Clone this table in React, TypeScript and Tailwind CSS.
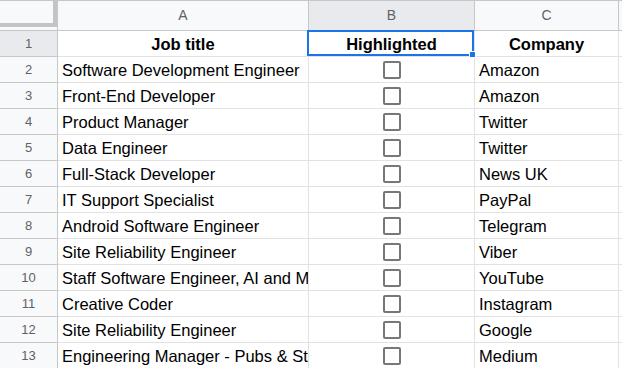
import React from 'react';

type Row = {
  title: string;
  company: string;
};

const rows: Row[] = [
  { title: 'Software Development Engineer', company: 'Amazon' },
  { title: 'Front-End Developer', company: 'Amazon' },
  { title: 'Product Manager', company: 'Twitter' },
  { title: 'Data Engineer', company: 'Twitter' },
  { title: 'Full-Stack Developer', company: 'News UK' },
  { title: 'IT Support Specialist', company: 'PayPal' },
  { title: 'Android Software Engineer', company: 'Telegram' },
  { title: 'Site Reliability Engineer', company: 'Viber' },
  { title: 'Staff Software Engineer, AI and ML', company: 'YouTube' },
  { title: 'Creative Coder', company: 'Instagram' },
  { title: 'Site Reliability Engineer', company: 'Google' },
  { title: 'Engineering Manager - Pubs & Studios', company: 'Medium' },
];

function Checkbox() {
  return <div className="w-[18px] h-[18px] rounded-[2px] border-2 border-[#777777] bg-white" />;
}

function App() {
  const colHead = 'h-[31px] flex items-center justify-center border-t border-r border-b border-[#c7c7c7] text-[14px] text-[#5f6368]';
  const rowHead = 'h-[26px] flex items-center justify-center border-r border-b border-[#c7c7c7] text-[13px] text-[#5f6368]';
  const cell = 'h-[26px] flex items-center border-r border-b border-[#e2e2e2] px-[4px] overflow-hidden whitespace-nowrap text-[16.5px] text-black';

  return (
    <div className="w-[622px] h-[368px] overflow-hidden bg-white" style={{ fontFamily: '"Liberation Sans", Arial, sans-serif' }}>
      <div className="grid grid-cols-[58px_251px_166px_144px_1fr]">
        {/* column headers */}
        <div className="h-[31px] border-t border-r border-b border-[#c7c7c7] bg-[#f8f9fa]">
          <div className="w-[57px] h-[26px] border-r-4 border-b-4 border-[#c1c4c8]" />
        </div>
        <div className={`${colHead} bg-[#f8f9fa]`}>A</div>
        <div className={`${colHead} bg-[#e8eaed] text-[#3c4043]`}>B</div>
        <div className={`${colHead} bg-[#f8f9fa]`}>C</div>
        <div className={`${colHead} bg-[#f8f9fa]`} />

        {/* row 1 */}
        <div className={`${rowHead} bg-[#e8eaed] text-[#3c4043]`}>1</div>
        <div className={`${cell} pt-[2px] justify-center font-bold`}>Job title</div>
        <div className={`${cell} pt-[2px] justify-center font-bold relative overflow-visible`}>
          Highlighted
          <div className="absolute left-[-2px] top-[-1px] right-0 bottom-0 border-2 border-[#1a73e8]">
            <div className="absolute right-[-4px] bottom-[-4px] w-[7px] h-[7px] bg-[#1a73e8] border border-white" />
          </div>
        </div>
        <div className={`${cell} pt-[2px] justify-center font-bold`}>Company</div>
        <div className={cell} />

        {rows.map((row, i) => (
          <React.Fragment key={i}>
            <div className={`${rowHead} bg-[#f8f9fa]`}>{i + 2}</div>
            <div className={`${cell} pt-[2px]`}>{row.title}</div>
            <div className={`${cell} justify-center`}>
              <Checkbox />
            </div>
            <div className={`${cell} pt-[2px]`}>{row.company}</div>
            <div className={cell} />
          </React.Fragment>
        ))}
      </div>
    </div>
  );
}

export default App;
